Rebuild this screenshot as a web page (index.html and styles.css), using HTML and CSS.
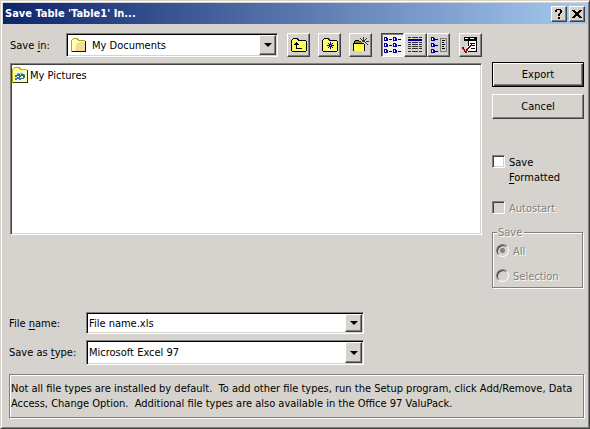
FILE: index.html
```
<!DOCTYPE html>
<html lang="en">
<head>
<meta charset="utf-8">
<meta name="viewport" content="width=device-width, initial-scale=1">
<title>Save Table 'Table1' In...</title>
<link rel="stylesheet" href="styles.css">
</head>
<body>
<main class="dialog">
  <header class="titlebar">
    <h1 class="title">Save Table 'Table1' In...</h1>
    <button class="caption-btn" type="button" aria-label="Help">
      <svg width="8" height="10" viewBox="0 0 8 10" shape-rendering="crispEdges"><path d="M1 0h5v1h1v3h-1v1h-1v2h-2v-2h1v-1h1v-3h-3v2h-2v-2h1zM3 8h2v2h-2z"/></svg>
    </button>
    <button class="caption-btn" type="button" aria-label="Close">
      <svg width="10" height="8" viewBox="0 0 10 8" shape-rendering="crispEdges"><path d="M0 0h3v1h1v1h2V1h1V0h3v1H9v1H8v1H7v2h1v1h1v1h1v1H7V7H6V6H4v1H3v1H0V7h1V6h1V5h1V3H2V2H1V1H0z"/></svg>
    </button>
  </header>

  <form class="content">
    <div class="browser">
      <div class="toolbar">
        <label class="toolbar-label" for="folder">Save <u>i</u>n:</label>
        <div class="combo combo-folder">
          <svg class="combo-icon" width="16" height="15" viewBox="0 0 16 15" shape-rendering="crispEdges"><path d="M1 2h1v-1h5v1h1v1h6v10H1z" fill="#ffffb0"/><path d="M5 6h1v-1h2v-1h6v9H4v-2h1z" fill="#f4dc98"/><path d="M0 2h1v-1h1v-1h5v1h1v1h6v1H7v-1H6v-1H2v1H1v11h13v1H0z" fill="#a8a820"/><path d="M14 3h1v11H1v-1h13z" fill="#111"/></svg>
          <select id="folder"><option>My Documents</option></select>
          <span class="arrow" aria-hidden="true"></span>
        </div>
        <div class="tools">
          <button class="tool" type="button" aria-label="Up one level">
            <svg width="16" height="14" viewBox="0 0 16 14" shape-rendering="crispEdges"><path d="M1 2h1v-1h5v1h1v1h7v10H1z" fill="#ffff60"/><path d="M0 2h1v-1h1v-1h5v1h1v1h7v1h1v10h-1v1H1v-1H0zM1 3v10h14V3H7V2H6V1H2v1H1z" fill-rule="evenodd"/><path d="M5 4h1v1h1v1h1v1H6v3h5v1H5V7H3V6h1V5h1z"/></svg>
          </button>
          <button class="tool" type="button" aria-label="Look in Favorites">
            <svg width="16" height="14" viewBox="0 0 16 14" shape-rendering="crispEdges"><path d="M1 2h1v-1h5v1h1v1h7v10H1z" fill="#ffff70"/><path d="M0 2h1v-1h1v-1h5v1h1v1h7v1h1v10h-1v1H1v-1H0zM1 3v10h14V3H7V2H6V1H2v1H1z" fill-rule="evenodd"/><path d="M8 4h1v3h3v1H9v3H8V8H5V7h3zM6 5h1v1H6zM10 5h1v1h-1zM6 9h1v1H6zM10 9h1v1h-1zM7 6h3v3H7z" fill="#0000a0"/><path d="M8 7h1v1H8z" fill="#8cf"/></svg>
          </button>
          <button class="tool" type="button" aria-label="Add to Favorites">
            <svg width="16" height="16" viewBox="0 0 16 16" shape-rendering="crispEdges"><path d="M1 7h10v7H1z" fill="#ffff50"/><path d="M2 4h4v1h3v2H1V5h1z" fill="#888820"/><path d="M2 3h4v1H2zM1 4h1v2H1zM0 6h11v1H1v7H0zM1 14h11V7h-1v7H1z"/><path d="M10 0h1v3h-1zM13 1h1v1h-1zM12 2h1v1h-1zM7 1h1v1H7zM8 2h1v1H8zM9 3h3v2H9zM13 4h3v1h-3zM6 4h2v1H6zM12 5h1v1h-1zM13 6h1v1h-1zM14 7h1v1h-1z" fill="#333"/></svg>
          </button>
        </div>
        <div class="tools tools-view">
          <button class="tool pressed" type="button" aria-label="List" aria-pressed="true">
            <svg width="17" height="16" viewBox="0 0 17 16" shape-rendering="crispEdges"><g id="entries"><path d="M0 0h3v1h1v3H0zM0 6h3v1h1v3H0zM0 12h3v1h1v3H0z" fill="#0000a0"/><path d="M1 1h1v2H1zM1 7h1v2H1zM1 13h1v2H1z" fill="#fff"/><path d="M5 2h3v1H5zM5 8h3v1H5zM5 14h3v1H5z"/></g><use href="#entries" x="9"/></svg>
          </button>
          <button class="tool" type="button" aria-label="Details">
            <svg width="15" height="16" viewBox="0 0 15 16" shape-rendering="crispEdges"><path d="M0 0h3v1H0zM4 0h6v1H4zM11 0h3v1h-3zM0 5h3v1H0zM4 5h6v1H4zM11 5h3v1h-3zM0 7h3v1H0zM4 7h6v1H4zM11 7h3v1h-3zM0 9h3v1H0zM4 9h6v1H4zM11 9h3v1h-3zM0 11h3v1H0zM4 11h6v1H4zM11 11h3v1h-3zM0 14h3v1H0zM4 14h6v1H4zM11 14h3v1h-3z" fill="#333"/><path d="M0 2h14v2H0z" fill="#0000a0"/></svg>
          </button>
          <button class="tool" type="button" aria-label="Properties">
            <svg width="16" height="16" viewBox="0 0 16 16" shape-rendering="crispEdges"><path d="M0 0h3v1h1v3H0zM0 6h3v1h1v3H0zM0 12h3v1h1v3H0z" fill="#0000a0"/><path d="M1 1h1v2H1zM1 7h1v2H1zM1 13h1v2H1z" fill="#fff"/><path d="M4 2h3v1H4zM4 8h3v1H4zM4 14h3v1H4z"/><path d="M9 1h6v13H9z" fill="#d6d3ce" stroke="#808080"/><path d="M11 3h3v1h-3zM11 5h2v1h-2zM11 7h3v1h-3zM11 9h2v1h-2zM11 11h3v1h-3z"/></svg>
          </button>
        </div>
        <button class="tool" type="button" aria-label="Commands and Settings">
          <svg width="17" height="17" viewBox="0 0 17 17" shape-rendering="crispEdges"><path d="M2 0h13v4H2z"/><path d="M3 1h3v1H3zM8 1h4v1H8z" fill="#fff"/><path d="M7 4h8v11H5V9h2z" fill="#fff"/><path d="M6 4h1v5H6zM14 4h1v11h-1zM6 14h9v1H6zM8 6h5v1H8zM9 8h4v1H9zM9 11h4v1H9z"/><path d="M0 10h2v2h1v2h1v-2h1v-1h1v-1h1V9h1V8h1V7h1v2H9v1H8v1H7v1H6v2H5v2H3v-1H2v-2H1v-1H0z" fill="#900000"/></svg>
        </button>
      </div>
      <ul class="files" aria-label="Files">
        <li class="file">
          <svg width="17" height="17" viewBox="0 0 17 17" shape-rendering="crispEdges"><path d="M1 2h1v-1h6v2h7v12H1z" fill="#ffff90"/><path d="M0 2h1v-1h1v-1h6v1h1v1h6v1H8v-1H7v-1H2v1H1v13h14v1H0z" fill="#b0b010"/><path d="M15 3h1v13H1v-1h14z" fill="#333300"/><path d="M3 5h10v9H3z" fill="#e8f4f0"/><path d="M5 6h6v1H5zM3 8h2v1H3zM11 7h2v2h-2z" fill="#70b0ff"/><path d="M4 8h1v-1h3v1h1v-1h3v1h1v2h-2V9H9v1H7V9H5v1H3V8z" fill="#208040"/><path d="M3 11h2v-1h3v1h3v-1h2v1h-1v1h-3v1H7v-1H5v1H3z" fill="#5060c0"/></svg>
          <span>My Pictures</span>
        </li>
      </ul>
    </div>

    <aside class="side">
      <button class="push default" type="submit">Export</button>
      <button class="push" type="button">Cancel</button>
      <label class="check check-format"><input type="checkbox"><span>Save<br><u>F</u>ormatted</span></label>
      <label class="check disabled"><input type="checkbox" disabled><span>Autostart</span></label>
      <fieldset class="group disabled" disabled>
        <legend>Save</legend>
        <label class="radio"><input type="radio" name="scope" checked><span>All</span></label>
        <label class="radio"><input type="radio" name="scope"><span>Selection</span></label>
      </fieldset>
    </aside>

    <div class="fields">
      <label for="filename">File <u>n</u>ame:</label>
      <div class="combo combo-name">
        <input id="filename" type="text" value="File name.xls">
        <button class="arrow" type="button" aria-label="Recent names"></button>
      </div>
      <label for="filetype">Save as <u>t</u>ype:</label>
      <div class="combo">
        <select id="filetype"><option>Microsoft Excel 97</option></select>
        <span class="arrow" aria-hidden="true"></span>
      </div>
    </div>

    <p class="note">Not all file types are installed by default.&nbsp; To add other file types, run the Setup program, click Add/Remove, Data Access, Change Option.&nbsp; Additional file types are also available in the Office 97 ValuPack.</p>
  </form>
</main>
</body>
</html>
```
FILE: styles.css
```
:root {
  --face: #d6d3ce;
  --light: #fff;
  --shadow: #808080;
  --dark: #404040;
}

* { box-sizing: border-box; }

body {
  margin: 0;
  background: var(--face);
  color: #000;
  font: 11px/15px "DejaVu Sans Condensed", "DejaVu Sans", sans-serif;
}

button, input, select {
  font: inherit;
  color: inherit;
  margin: 0;
  padding: 0;
}

svg { display: block; }
u { text-underline-offset: 2px; }

.dialog {
  display: flex;
  flex-direction: column;
  min-height: 100vh;
  padding: 2px 1px 1px 2px;
  border: 1px solid;
  border-color: var(--face) var(--dark) var(--dark) var(--face);
  box-shadow: inset 1px 1px var(--light), inset -1px -1px var(--shadow);
}

.titlebar {
  display: flex;
  align-items: center;
  gap: 2px;
  height: 21px;
  padding: 0 3px 0 2px;
  background: linear-gradient(90deg, #0c246c, #a6caf0);
}

.title {
  flex: 1;
  margin: 0;
  color: #fff;
  font-size: 11px;
}

button, .arrow {
  display: grid;
  place-items: center;
  background: var(--face);
  border: 1px solid;
  border-color: var(--light) var(--dark) var(--dark) var(--light);
  border-radius: 0;
  box-shadow: inset -1px -1px var(--shadow);
}

.caption-btn { width: 16px; height: 16px; }

.content {
  flex: 1;
  display: grid;
  grid-template-columns: minmax(0, 1fr) 92px;
  grid-template-rows: auto 1fr auto;
  column-gap: 10px;
  padding: 9px 4px 9px 6px;
}

.browser { padding-left: 1px; }

.toolbar {
  display: flex;
  align-items: center;
  gap: 9px;
  height: 24px;
  margin-bottom: 6px;
}

.toolbar-label { width: 47px; white-space: nowrap; }

.combo {
  display: grid;
  grid-template-columns: minmax(0, 1fr) 17px;
  height: 25px;
  padding: 1px;
  background: #fff;
  border: 1px solid;
  border-color: var(--shadow) var(--light) var(--light) var(--shadow);
  box-shadow: inset 1px 1px #000, inset -1px -1px var(--face);
}

.combo select, .combo input {
  grid-area: 1 / 1 / 2 / 3;
  width: 100%;
  min-width: 0;
  padding: 0 18px 0 1px;
  border: 0;
  background: transparent;
  appearance: none;
  outline: 0;
}

.combo .arrow { grid-area: 1 / 2; }
span.arrow { pointer-events: none; }

.arrow::after {
  content: "";
  border: 4px solid transparent;
  border-top-color: #000;
  border-bottom: 0;
}

.combo-name { height: 22px; }

.combo-folder { flex: 1; height: 24px; }
.combo-icon { grid-area: 1 / 1; align-self: center; margin-left: 3px; }
.combo.combo-folder select { padding-left: 24px; }

.tools { display: flex; gap: 8px; }
.tools-view { gap: 0; }
.tool { width: 23px; height: 24px; }

.pressed {
  background: repeating-conic-gradient(#fff 0 25%, #e6e4e0 0 50%) 0 0 / 2px 2px;
  border-color: var(--dark) var(--light) var(--light) var(--dark);
  box-shadow: inset 1px 1px var(--shadow);
}

.files {
  height: 172px;
  margin: 0;
  padding: 3px 0;
  list-style: none;
  background: #fff;
  border: 1px solid;
  border-color: var(--shadow) var(--light) var(--light) var(--shadow);
  box-shadow: inset 1px 1px var(--dark), inset -1px -1px var(--face);
}

.file { display: flex; align-items: center; gap: 1px; padding-left: 1px; }

.side {
  display: flex;
  flex-direction: column;
  grid-row: 1 / 3;
  grid-column: 2;
  padding-top: 29px;
}

.push { height: 25px; margin-bottom: 7px; }

.default {
  border-color: #000;
  box-shadow: inset 1px 1px var(--light), inset -1px -1px var(--dark), inset -2px -2px var(--shadow);
}

.check, .radio {
  display: flex;
  align-items: flex-start;
  gap: 4px;
}

.check-format { margin: 29px 0 16px; }

input[type="checkbox"], input[type="radio"] {
  flex: none;
  width: 13px;
  height: 13px;
  appearance: none;
  background: #fff;
  border: 1px solid;
  border-color: var(--shadow) var(--light) var(--light) var(--shadow);
  box-shadow: inset 1px 1px var(--dark), inset -1px -1px var(--face);
}

input[type="checkbox"]:disabled, input[type="radio"]:disabled { background: var(--face); }

input[type="checkbox"]:checked { background: #000; background-clip: content-box; padding: 2px; }

input[type="radio"] { border-radius: 50%; }
input[type="radio"]:checked:disabled {
  background: radial-gradient(circle, var(--shadow) 0 2px, transparent 3px), var(--face);
}

.disabled {
  color: var(--shadow);
  text-shadow: 1px 1px var(--light);
}

.group {
  display: grid;
  gap: 10px;
  min-width: 0;
  margin: 9px 1px 0 0;
  padding: 4px 3px 3px;
  border: 1px solid var(--shadow);
  box-shadow: 1px 1px var(--light), inset 1px 1px var(--light);
}

.group legend { margin-left: 1px; padding: 0 2px 0 1px; background: var(--face); }

.fields {
  grid-row: 3;
  display: grid;
  grid-template-columns: 70px 278px;
  column-gap: 7px;
  row-gap: 6px;
  align-items: center;
}

.fields label { white-space: nowrap; }

.note {
  grid-column: 1 / 3;
  margin: 9px 0 0;
  padding: 6px 1px;
  border: 1px solid var(--shadow);
  box-shadow: 1px 1px var(--light), inset 1px 1px var(--light);
}
```
